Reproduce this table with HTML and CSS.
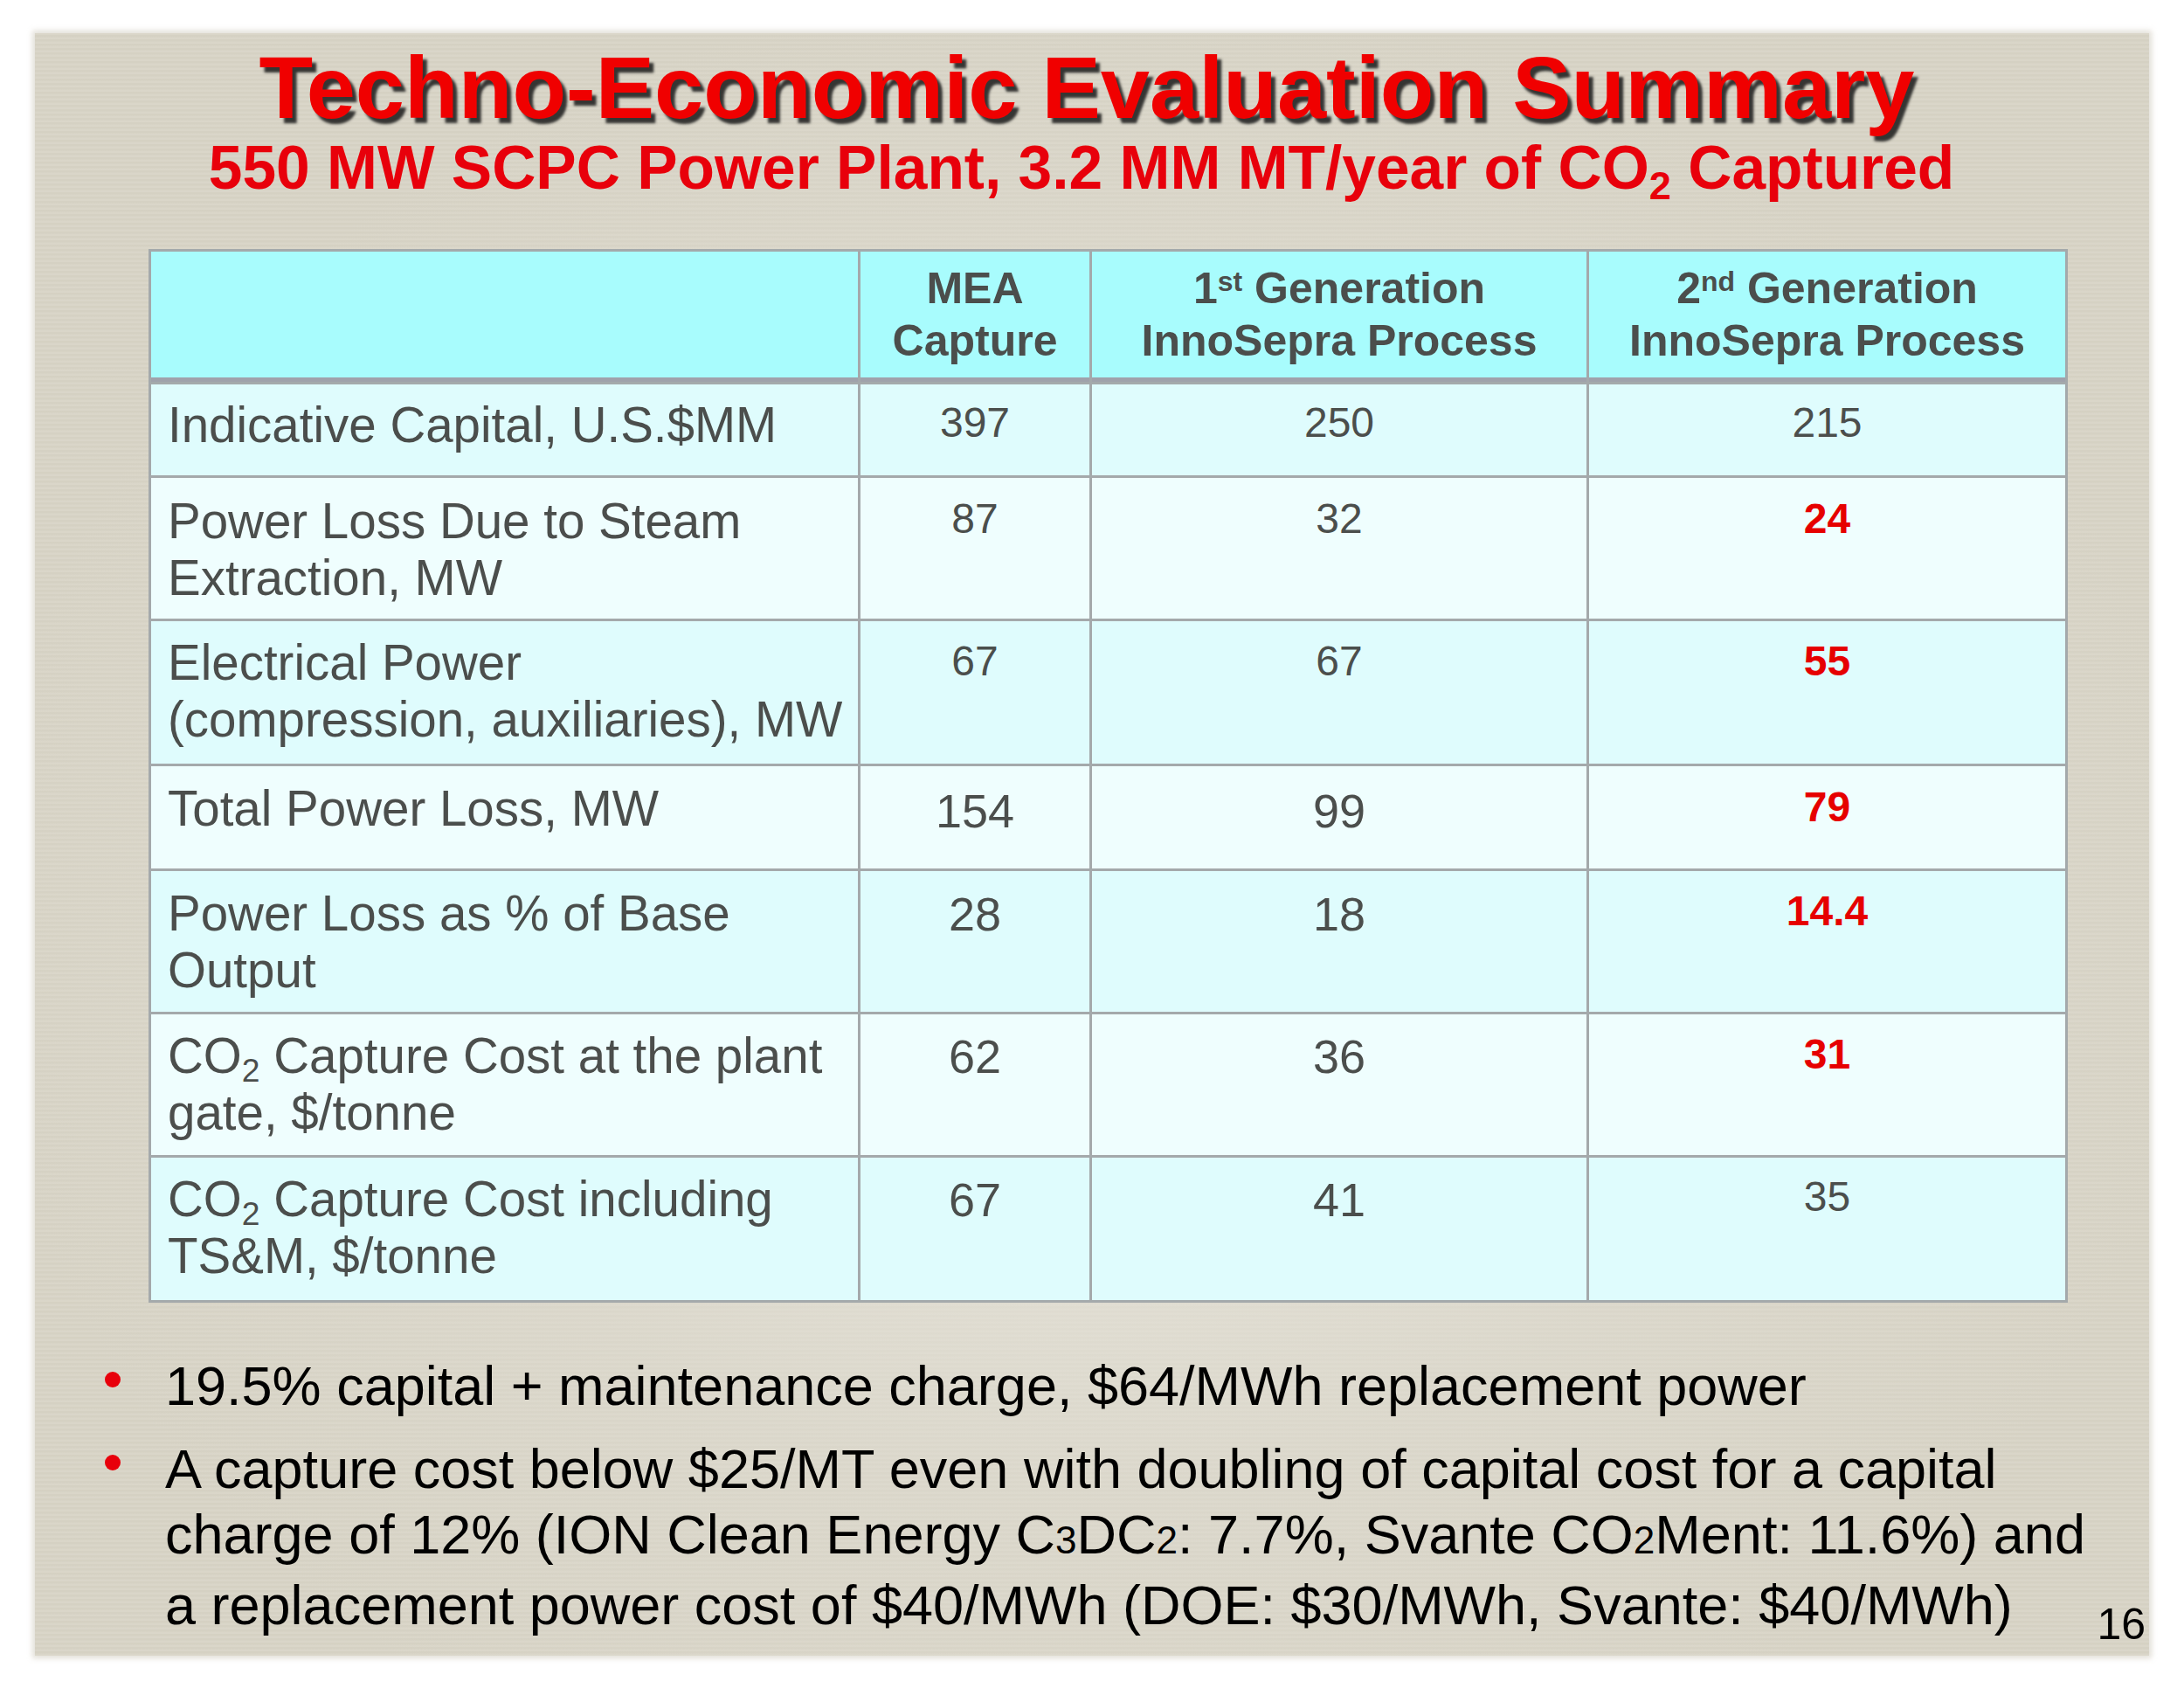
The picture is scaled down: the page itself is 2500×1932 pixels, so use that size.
FILE: index.html
```html
<!DOCTYPE html>
<html lang="en">
<head>
<meta charset="utf-8">
<title>Techno-Economic Evaluation Summary</title>
<link rel="stylesheet" href="styles.css">
</head>
<body>
<div class="paper">
  <header class="heading">
    <h1 class="title">Techno-Economic Evaluation Summary</h1>
    <h2 class="subtitle">550 MW SCPC Power Plant, 3.2 MM MT/year of CO<sub>2</sub> Captured</h2>
  </header>

  <div class="table">
    <div class="th"></div>
    <div class="th">MEA<br>Capture</div>
    <div class="th">1<sup>st</sup> Generation<br>InnoSepra Process</div>
    <div class="th">2<sup>nd</sup> Generation<br>InnoSepra Process</div>

    <div class="cell odd lbl r1">Indicative Capital, U.S.$MM</div>
    <div class="cell odd num r1">397</div>
    <div class="cell odd num r1">250</div>
    <div class="cell odd num r1">215</div>

    <div class="cell even lbl r2">Power Loss Due to Steam<br>Extraction, MW</div>
    <div class="cell even num r2">87</div>
    <div class="cell even num r2">32</div>
    <div class="cell even num hl r2">24</div>

    <div class="cell odd lbl r3">Electrical Power<br>(compression, auxiliaries), MW</div>
    <div class="cell odd num r3">67</div>
    <div class="cell odd num r3">67</div>
    <div class="cell odd num hl r3">55</div>

    <div class="cell even lbl r4">Total Power Loss, MW</div>
    <div class="cell even big r4">154</div>
    <div class="cell even big r4">99</div>
    <div class="cell even num hl r4">79</div>

    <div class="cell odd lbl r5">Power Loss as % of Base<br>Output</div>
    <div class="cell odd big r5">28</div>
    <div class="cell odd big r5">18</div>
    <div class="cell odd num hl r5">14.4</div>

    <div class="cell even lbl r6">CO<sub>2</sub> Capture Cost at the plant<br>gate, $/tonne</div>
    <div class="cell even big r6">62</div>
    <div class="cell even big r6">36</div>
    <div class="cell even num hl r6">31</div>

    <div class="cell odd lbl r7">CO<sub>2</sub> Capture Cost including<br>TS&amp;M, $/tonne</div>
    <div class="cell odd big r7">67</div>
    <div class="cell odd big r7">41</div>
    <div class="cell odd num r7">35</div>
  </div>

  <div class="bottom">
    <ul class="bullets">
      <li><span class="dot"></span><p>19.5% capital + maintenance charge, $64/MWh replacement power</p></li>
      <li><span class="dot"></span><p><span class="ln">A capture cost below $25/MT even with doubling of capital cost for a capital</span><span class="ln">charge of 12% (ION Clean Energy C<span class="sm">3</span>DC<span class="sm">2</span>: 7.7%, Svante CO<span class="sm">2</span>Ment: 11.6%) and</span><span class="ln">a replacement power cost of $40/MWh (DOE: $30/MWh, Svante: $40/MWh)</span></p></li>
    </ul>
    <div class="page-num">16</div>
  </div>
</div>
</body>
</html>
```

FILE: styles.css
```css
* { box-sizing: border-box; }

html, body {
  margin: 0;
  padding: 0;
  background: #ffffff;
}

body {
  width: 2500px;
  height: 1932px;
  overflow: hidden;
  font-family: "Liberation Sans", Arial, sans-serif;
}

.paper {
  margin: 38px 40px 0 40px;
  height: 1857px;
  padding: 12px 0 0 80px;
  background:
    radial-gradient(ellipse at 50% 55%, rgba(236, 234, 226, 0.85) 0%, rgba(226, 223, 213, 0.4) 45%, rgba(214, 210, 196, 0) 75%),
    repeating-linear-gradient(0deg, rgba(255,255,255,0.05) 0px, rgba(255,255,255,0.05) 2px, rgba(0,0,0,0.015) 3px, rgba(0,0,0,0.015) 5px),
    #d8d4c6;
  box-shadow: 0 0 6px 3px rgba(214, 210, 198, 0.7);
}

/* Heading */
.heading {
  padding-right: 92px;
  text-align: center;
}

.title {
  margin: 0;
  font-size: 101px;
  line-height: 100px;
  font-weight: bold;
  color: #f00000;
  text-shadow: 5px 6px 3px rgba(25, 25, 25, 0.85);
  white-space: nowrap;
}

.subtitle {
  margin: 8px 12px 0 0;
  font-size: 69.5px;
  line-height: 69px;
  font-weight: bold;
  color: #e8000b;
  white-space: nowrap;
}

.subtitle sub {
  font-size: 0.65em;
  line-height: 0;
  vertical-align: -0.27em;
}

/* Table */
.table {
  margin: 58px 0 0 50px;
  width: 2197px;
  height: 1206px;
  display: grid;
  grid-template-columns: 809px 262px 566px 545px;
  grid-template-rows: 149px 104px 161px 163px 117px 161px 161px 163px;
  gap: 3px;
  padding: 3px;
  background: #a4a9ab;
  color: #4b4e4c;
}

.th {
  background: #a8fcfd;
  border-bottom: 5px solid #9fa2ab;
  font-size: 50px;
  line-height: 60px;
  font-weight: bold;
  text-align: center;
  padding-top: 12px;
  white-space: nowrap;
}

.th sup {
  font-size: 0.64em;
  line-height: 0;
  vertical-align: 0.45em;
}

.cell {
  line-height: 65px;
  text-align: center;
  white-space: nowrap;
}

.odd { background: #dffcfd; }
.even { background: #effefe; }

.lbl {
  text-align: left;
  font-size: 56.5px;
  padding-left: 19px;
  padding-top: 15px;
}

.lbl sub {
  font-size: 0.66em;
  line-height: 0;
  vertical-align: -0.26em;
}

.num {
  font-size: 48px;
  padding-top: 13px;
}

.big {
  font-size: 54px;
  padding-top: 16px;
}

.hl {
  color: #e60000;
  font-weight: bold;
}

.lbl.r1 { padding-top: 14px; }
.num.r1 { padding-top: 11px; }
.lbl.r2 { padding-top: 17px; }
.num.r2 { padding-top: 14px; }
.lbl.r3 { padding-top: 15px; }
.num.r3 { padding-top: 13px; }
.lbl.r4 { padding-top: 16px; }
.big.r4 { padding-top: 19px; }
.num.r4 { padding-top: 14px; }
.lbl.r5 { padding-top: 16px; }
.big.r5 { padding-top: 17px; }
.num.r5 { padding-top: 13px; }
.num.r7 { padding-top: 12px; }

/* Bottom bullets */
.bottom {
  margin-top: 58px;
  display: flex;
  align-items: flex-end;
}

.bullets {
  flex: 1;
  margin: 0;
  padding: 0;
  list-style: none;
}

.bullets li {
  display: flex;
  align-items: flex-start;
  margin-bottom: 20px;
}

.bullets li:last-child { margin-bottom: 0; }

.dot {
  flex: none;
  width: 18px;
  height: 18px;
  border-radius: 50%;
  background: #e8000b;
  margin-top: 21px;
  margin-right: 51px;
}

.bullets p {
  margin: 0;
  font-size: 63px;
  line-height: 75px;
  color: #000;
  white-space: nowrap;
}

.ln { display: block; }

.sm { font-size: 0.7em; }

.page-num {
  flex: none;
  font-size: 50px;
  line-height: 50px;
  color: #000;
  margin: 0 4px -9px 0;
}
```
